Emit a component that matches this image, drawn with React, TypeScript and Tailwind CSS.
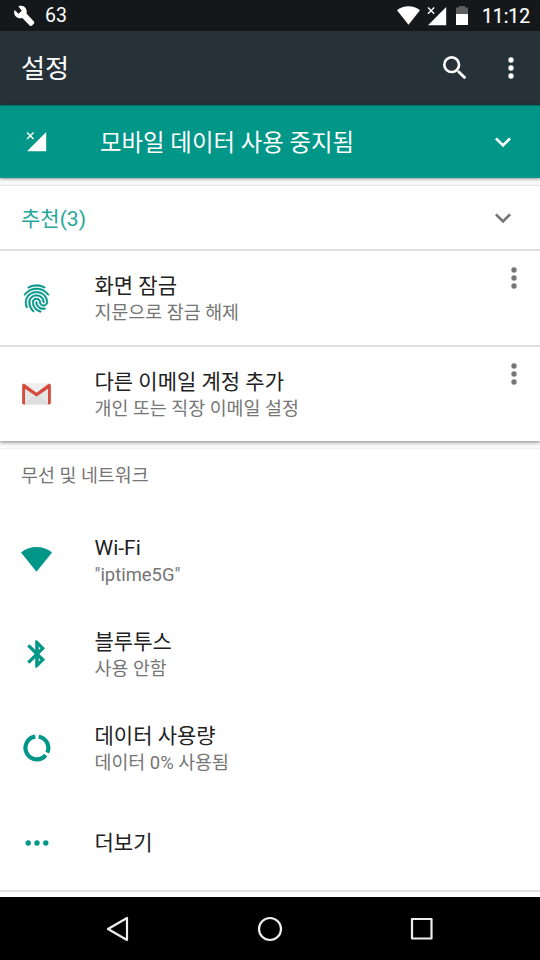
import React from 'react';
import { MdBluetooth, MdExpandMore, MdFingerprint, MdSearch } from 'react-icons/md';

interface IconProps {
  className?: string;
}

const DotsVertical: React.FC<IconProps> = ({ className }) => (
  <svg viewBox="0 0 8 24" fill="currentColor" className={className}>
    <circle cx="4" cy="4" r="2.7" />
    <circle cx="4" cy="12" r="2.7" />
    <circle cx="4" cy="20" r="2.7" />
  </svg>
);

const DotsHorizontal: React.FC<IconProps> = ({ className }) => (
  <svg viewBox="0 0 32 8" fill="currentColor" className={className}>
    <circle cx="7.2" cy="4" r="2.7" />
    <circle cx="16" cy="4" r="2.7" />
    <circle cx="24.8" cy="4" r="2.7" />
  </svg>
);

const Wrench: React.FC<IconProps> = ({ className }) => (
  <svg viewBox="0 0 22 22" fill="currentColor" className={className}>
    <path d="M5.300 1.200C8 .2 11 .8 12.500 3c1.300 1.800 1.500 3.800 1 5.600l7.200 7.600c.8.900.8 1.800.1 2.600l-1.700 1.700c-.8.700-1.800.6-2.500-.1l-7.300-7.500c-2.200.8-4.800.400-6.500-1.400C1 9.600.7 7 1.600 5l3.900 3.800 3.300-3z" />
  </svg>
);

const WifiFan: React.FC<IconProps> = ({ className }) => (
  <svg viewBox="0 0 31 25" fill="currentColor" className={className}>
    <path d="M0 5.4C4.3 2 9.700 0 15.500 0S26.700 2 31 5.400L15.500 24.800z" />
  </svg>
);

const NoSignal: React.FC<IconProps> = ({ className }) => (
  <svg viewBox="0 0 20 20" className={className}>
    <path d="M19.200 1v18.200H1z" fill="currentColor" />
    <path d="M1 1.500l6.200 6.200M7.200 1.500L1 7.700" stroke="currentColor" strokeWidth="1.400" />
  </svg>
);

const Battery: React.FC<IconProps> = ({ className }) => (
  <svg viewBox="0 0 12 20" className={className}>
    <path d="M3 0h6v1.500h3V8H0V1.500h3z" fill="#5c5e60" />
    <path d="M0 8h12v11H0z" fill="#fff" />
  </svg>
);

const DataRing: React.FC<IconProps> = ({ className }) => (
  <svg viewBox="0 0 32 32" fill="none" stroke="currentColor" strokeWidth="4.200" className={className}>
    <path d="M17.700 4.700A11.400 11.400 0 0 1 26.300 20.700" />
    <path d="M24.700 23.200A11.400 11.400 0 1 1 14.300 4.700" />
  </svg>
);

const Gmail: React.FC<IconProps> = ({ className }) => (
  <svg viewBox="0 0 30 23" className={className}>
    <path d="M1.500 .5h27v22h-27z" fill="#e6e6e6" />
    <path d="M3 22.500l12-11 12 11z" fill="#dedede" />
    <path d="M3.500 .5h23L15 10z" fill="#f0f0f0" />
    <path d="M3 22.500l9-8.500M27 22.500L18 14" stroke="#cfcfcf" strokeWidth=".6" />
    <path d="M0 2.500C0 1 1.600.3 2.800 1.200L15 10.200l12.200-9C28.400.3 30 1 30 2.500v18.200c0 1-.8 1.800-1.800 1.800h-1.200V6L15 14 3 6v16.500H1.800c-1 0-1.800-.8-1.800-1.800z" fill="#d54b3d" />
  </svg>
);

interface RowProps {
  icon: React.ReactNode;
  title: string;
  summary?: string;
  menu?: boolean;
}

const Row: React.FC<RowProps> = ({ icon, title, summary, menu }) => (
  <div className={menu ? 'flex h-[94px] items-center pl-[21px]' : 'flex h-[94.250px] items-center pl-[21px]'}>
    <div className="flex w-[73.500px] shrink-0">
      <div className="flex w-[31px] justify-center">{icon}</div>
    </div>
    <div className="flex-1 pt-px">
      <div className="text-[21px] leading-[28px] text-[#212121]">{title}</div>
      {summary && <div className="text-[18.400px] leading-[25px] text-[#757575]">{summary}</div>}
    </div>
    {menu && <DotsVertical className="mr-[22.500px] mt-[14.500px] h-6 w-2 self-start text-[#757575]" />}
  </div>
);

export default function App() {
  return (
    <div className="flex h-[960px] w-[540px] flex-col overflow-hidden bg-[#fafafa] font-[Roboto,'Noto_Sans_CJK_KR',sans-serif]">
      <div className="flex h-[31px] shrink-0 items-center bg-[#14181b] text-white">
        <Wrench className="ml-[12.500px] size-[22px]" />
        <span className="ml-[10.500px] pt-px text-[19.500px] leading-[30px]">63</span>
        <WifiFan className="ml-auto h-[19px] w-[23px]" />
        <NoSignal className="ml-[7px] size-5" />
        <Battery className="ml-[9px] h-5 w-3" />
        <span className="ml-[14px] mr-[10px] pt-[2px] text-[19.300px] leading-[29px] [-webkit-text-stroke:0.2px_white]">11:12</span>
      </div>

      <header className="flex h-[74px] shrink-0 items-center bg-[#263238] pl-[21px] text-white">
        <h1 className="flex-1 pt-[2px] text-[26.200px] leading-[38px]">설정</h1>
        <MdSearch className="size-[32px]" />
        <DotsVertical className="ml-[36px] mr-[25px] h-6 w-2" />
      </header>

      <div className="z-10 flex h-[73px] shrink-0 items-center bg-[#009688] pl-[26px] text-white shadow-[0_1px_3px_rgba(0,0,0,0.4),inset_0_3px_2px_-2px_rgba(0,0,0,0.25)]">
        <NoSignal className="size-[21px]" />
        <span className="ml-[53px] flex-1 pt-[2px] text-[23.400px] leading-[34px]">모바일 데이터 사용 중지됨</span>
        <MdExpandMore className="mr-[21px] size-[32px]" />
      </div>

      <section className="mt-[7px] shrink-0 bg-white shadow-[0_2px_3px_rgba(0,0,0,0.35)]">
        <div className="flex h-[64px] items-center border-t border-[#e8e8e4] pl-[21px]">
          <span className="flex-1 pt-[2px] text-[21px] leading-[30px] text-[#26a69a]">추천(3)</span>
          <MdExpandMore className="mr-[21px] size-[32px] text-[#757575]" />
        </div>
        <div className="border-t-2 border-[#e0e0e0]">
          <Row
            icon={<MdFingerprint className="size-[33px] shrink-0 stroke-current stroke-[0.500] text-[#009688] [&>path[fill=none]]:stroke-none" />}
            title="화면 잠금"
            summary="지문으로 잠금 해제"
            menu
          />
        </div>
        <div className="border-t-2 border-[#e0e0e0]">
          <Row icon={<Gmail className="h-[22px] w-[29px]" />} title="다른 이메일 계정 추가" summary="개인 또는 직장 이메일 설정" menu />
        </div>
      </section>

      <section className="mt-[7px] shrink-0 border-t border-t-[#eeeeee] bg-white">
        <div className="h-[63.750px] pl-[21px] pt-[13px] text-[18.400px] leading-[27px] text-[#757575]">무선 및 네트워크</div>
        <Row icon={<WifiFan className="h-[25px] w-[31px] text-[#009688]" />} title="Wi-Fi" summary={'"iptime5G"'} />
        <Row
          icon={<MdBluetooth className="size-[32px] shrink-0 stroke-current stroke-[0.600] text-[#009688] [&>path[fill=none]]:stroke-none" />}
          title="블루투스"
          summary="사용 안함"
        />
        <Row icon={<DataRing className="size-[32px] shrink-0 text-[#009688]" />} title="데이터 사용량" summary="데이터 0% 사용됨" />
        <Row icon={<DotsHorizontal className="h-2 w-8 shrink-0 text-[#009688]" />} title="더보기" />
      </section>
      <div className="flex-1 border-t-2 border-[#e0e0e0] bg-white" />

      <nav className="z-10 flex h-[63px] shrink-0 items-center justify-between bg-black px-[102px] text-[#eeeeee]">
        <svg viewBox="0 0 32 32" fill="none" stroke="currentColor" strokeWidth="2.200" strokeLinejoin="round" className="size-8">
          <path d="M25 5v22L6 16z" />
        </svg>
        <svg viewBox="0 0 32 32" fill="none" stroke="currentColor" strokeWidth="2.200" className="size-8">
          <circle cx="16" cy="16" r="11" />
        </svg>
        <svg viewBox="0 0 32 32" fill="none" stroke="currentColor" strokeWidth="2.200" strokeLinejoin="round" className="size-8">
          <path d="M6 6h19.500v19.500H6z" />
        </svg>
      </nav>
    </div>
  );
}
